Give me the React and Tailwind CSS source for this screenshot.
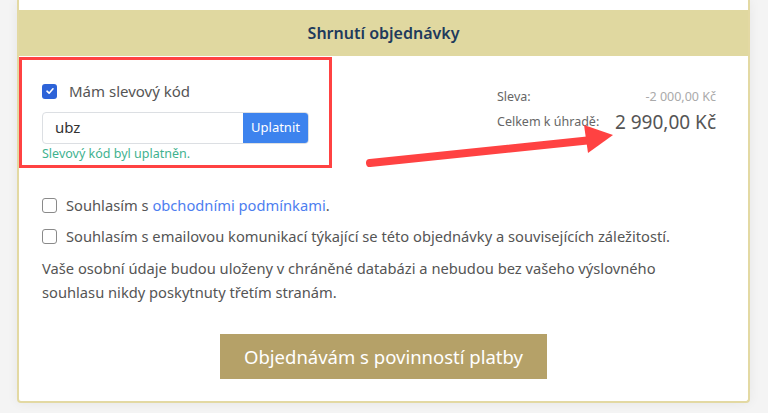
export default function App() {
  return (
    <div
      className="relative h-[413px] w-[768px] overflow-hidden bg-[#f4f4f4]"
      style={{ fontFamily: '"Noto Sans", "Open Sans", sans-serif' }}
    >
      <div className="ml-[17px] w-[733px] rounded-b-[4px] border-x-2 border-b-2 border-[#e3d9a3] bg-white pt-[10px] shadow-[0_0_12px_rgba(0,0,0,0.06)]">
        <div className="flex h-[46px] items-center justify-center bg-[#e0d8a0]">
          <h2 className="text-[16px] font-semibold text-[#203a5c]">Shrnutí objednávky</h2>
        </div>

        <div className="flex">
          <div className="mt-[1px] h-[111px] w-[313px] border-[3px] border-[#ff4242] pl-[20px] pt-[20px]">
            <label className="flex items-center gap-[12px] text-[15px] text-[#555]">
              <span className="flex h-[15px] w-[15px] items-center justify-center rounded-[3px] bg-[#2d63d8]">
                <svg width="10" height="10" viewBox="0 0 10 10">
                  <path d="M2 5.2 L4.1 7.2 L8 2.8" fill="none" stroke="white" strokeWidth="1.6" strokeLinecap="round" strokeLinejoin="round" />
                </svg>
              </span>
              Mám slevový kód
            </label>
            <div className="mt-[9px] flex h-[32px] w-[267px] overflow-hidden rounded-[4px] border border-[#dcdfe3]">
              <div className="flex flex-1 items-center pl-[12px] text-[15px] text-[#333]">ubz</div>
              <button className="w-[65px] bg-[#3d83ee] text-[13px] text-white">Uplatnit</button>
            </div>
            <p className="mt-[1px] text-[12.5px] text-[#3fb28f]">Slevový kód byl uplatněn.</p>
          </div>

          <div className="ml-[165px] mt-[32px] w-[219px] text-[#666]">
            <div className="flex items-center justify-between text-[12.5px]">
              <span>Sleva:</span>
              <span className="text-[#aaa]">-2 000,00 Kč</span>
            </div>
            <div className="mt-[1px] flex items-center justify-between">
              <span className="text-[12.5px]">Celkem k úhradě:</span>
              <span className="text-[19px] text-[#555]">2 990,00 Kč</span>
            </div>
          </div>
        </div>

        <div className="px-[23px] pt-[26px] text-[14.7px] text-[#555]">
          <label className="flex items-center gap-[9px]">
            <span className="h-[15px] w-[15px] rounded-[3px] border border-[#8a8a8a] bg-white" />
            <span>
              Souhlasím s <a className="text-[#4d7ef0]">obchodními podmínkami</a>.
            </span>
          </label>
          <label className="mt-[9px] flex items-center gap-[9px]">
            <span className="h-[15px] w-[15px] rounded-[3px] border border-[#8a8a8a] bg-white" />
            <span>Souhlasím s emailovou komunikací týkající se této objednávky a souvisejících záležitostí.</span>
          </label>
          <p className="mt-[9px] w-[650px] leading-[24px]">
            Vaše osobní údaje budou uloženy v chráněné databázi a nebudou bez vašeho výslovného souhlasu nikdy poskytnuty třetím stranám.
          </p>
        </div>

        <div className="flex justify-center pb-[22px] pt-[30px]">
          <button className="h-[45px] w-[327px] bg-[#b5a168] text-[18.5px] text-white">
            Objednávám s povinností platby
          </button>
        </div>
      </div>

      <svg className="absolute left-0 top-0" width="768" height="413" viewBox="0 0 768 413">
        <line x1="370" y1="163" x2="592" y2="140" stroke="#ff4242" strokeWidth="8" strokeLinecap="round" />
        <polygon points="613,135 584,125 588,153" fill="#ff4242" />
      </svg>
    </div>
  );
}
